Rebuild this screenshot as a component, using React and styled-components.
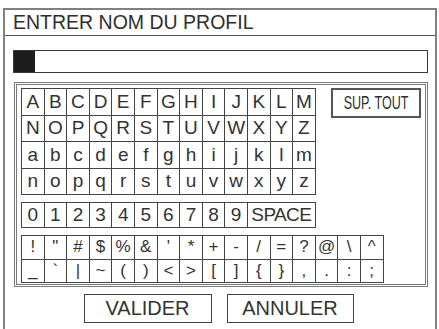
import React from "react";
import styled, { createGlobalStyle } from "styled-components";

const GlobalStyle = createGlobalStyle`
  html, body {
    margin: 0;
    padding: 0;
    background: #fff;
    overflow: hidden;
  }
  body {
    font-family: "Liberation Sans", Arial, sans-serif;
    color: #2e2e2e;
  }
`;

const Frame = styled.div`
  margin: 8px 0 0 3px;
  width: 434px;
  height: 321px;
  box-sizing: border-box;
  border: 2px solid #808080;
  border-bottom: none;
  display: flex;
  flex-direction: column;
`;

const TitleBar = styled.div`
  height: 25px;
  border-bottom: 1px solid #555;
  padding-left: 8px;
  font-size: 19.5px;
  line-height: 25px;
`;

const Body = styled.div`
  padding: 14px 7px 0 8px;
  display: flex;
  flex-direction: column;
`;

const InputBox = styled.div`
  height: 23px;
  box-sizing: border-box;
  border: 1.5px solid #3a3a3a;
  display: flex;
`;

const Cursor = styled.div`
  width: 21px;
  background: #1c1c1c;
`;

const Panel = styled.div`
  margin: 9px 0 0 1px;
  width: 414px;
  height: 205px;
  box-sizing: border-box;
  border: 3px double #7a7a7a;
  padding: 3px 4px 4px 4px;
  display: flex;
  flex-direction: column;
  align-items: flex-start;
  gap: 7px;
`;

const TopRow = styled.div`
  display: flex;
  align-items: flex-start;
  gap: 15px;
`;

const KeyGrid = styled.div`
  display: grid;
  grid-template-columns: repeat(${(p) => p.cols}, 22.6px);
  grid-auto-rows: ${(p) => p.rowH}px;
  border-top: 1.5px solid #444;
  border-left: 1.5px solid #444;
`;

const Key = styled.div`
  grid-column: span ${(p) => p.span || 1};
  border-right: 1.5px solid #444;
  border-bottom: 1.5px solid #444;
  display: flex;
  align-items: center;
  justify-content: center;
  font-size: ${(p) => p.size || 19}px;
  letter-spacing: ${(p) => (p.span ? "-0.6px" : "0")};
  color: #333;
  overflow: hidden;
`;

const SideButton = styled.div`
  width: 90px;
  height: 30px;
  box-sizing: border-box;
  border: 2px solid #555;
  display: flex;
  align-items: center;
  justify-content: center;
`;

const Narrow = styled.span`
  display: inline-block;
  font-size: 19px;
  white-space: nowrap;
  transform: scaleX(0.66);
`;

const Actions = styled.div`
  margin-top: 7px;
  padding-right: 4px;
  display: flex;
  justify-content: center;
  gap: 15px;
`;

const ActionButton = styled.div`
  width: ${(p) => p.w}px;
  height: 29px;
  box-sizing: border-box;
  border: 1.5px solid #444;
  display: flex;
  align-items: center;
  justify-content: center;
  font-size: 20px;
  color: #333;
`;

const upper = "ABCDEFGHIJKLMNOPQRSTUVWXYZ".split("");
const lower = "abcdefghijklmnopqrstuvwxyz".split("");
const digits = "0123456789".split("");
const symbols1 = ["!", '"', "#", "$", "%", "&", "'", "*", "+", "-", "/", "=", "?", "@", "\\", "^"];
const symbols2 = ["_", "`", "|", "~", "(", ")", "<", ">", "[", "]", "{", "}", ",", ".", ":", ";"];

export default function App() {
  return (
    <>
      <GlobalStyle />
      <Frame>
        <TitleBar>ENTRER NOM DU PROFIL</TitleBar>
        <Body>
          <InputBox>
            <Cursor />
          </InputBox>
          <Panel>
            <TopRow>
              <KeyGrid cols={13} rowH={26.5}>
                {[...upper, ...lower].map((c, i) => (
                  <Key key={i}>{c}</Key>
                ))}
              </KeyGrid>
              <SideButton>
                <Narrow>SUP. TOUT</Narrow>
              </SideButton>
            </TopRow>
            <KeyGrid cols={13} rowH={25}>
              {digits.map((c) => (
                <Key key={c}>{c}</Key>
              ))}
              <Key span={3}>SPACE</Key>
            </KeyGrid>
            <KeyGrid cols={16} rowH={23.5}>
              {[...symbols1, ...symbols2].map((c, i) => (
                <Key key={i} size={17}>
                  {c}
                </Key>
              ))}
            </KeyGrid>
          </Panel>
          <Actions>
            <ActionButton w={128}>VALIDER</ActionButton>
            <ActionButton w={127}>ANNULER</ActionButton>
          </Actions>
        </Body>
      </Frame>
    </>
  );
}
